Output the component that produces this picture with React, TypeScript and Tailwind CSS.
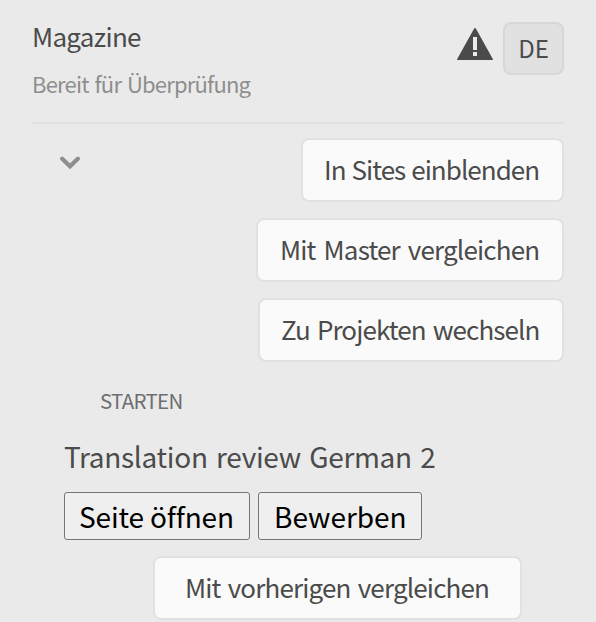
import React from "react";

function ActionButton({ label, className }: { label: string; className: string }) {
  return (
    <button
      className={`flex h-16 items-center rounded-lg border-2 border-[#e1e1e1] bg-[#fafafa] pb-[2px] text-[26px] leading-[30px] whitespace-nowrap text-[#4b4b4b] ${className}`}
    >
      {label}
    </button>
  );
}

function NativeButton({ label, className }: { label: string; className: string }) {
  return (
    <button
      className={`flex h-12 items-center rounded-[3px] border border-[#767676] bg-[#efefef] text-[28px] leading-[34px] whitespace-nowrap text-black ${className}`}
    >
      {label}
    </button>
  );
}

export default function App() {
  return (
    <main className="h-[622px] w-[596px] overflow-hidden bg-[#eaeaea] pl-8 font-['Noto_Sans_CJK_SC','Noto_Sans',sans-serif] text-[#4b4b4b]">
      <header className="flex h-[124px] w-[532px] justify-between border-b-2 border-[#e1e1e1]">
        <div className="pt-5 whitespace-nowrap">
          <h1 className="h-8 text-[26px] leading-8 tracking-[-0.7px]">Magazine</h1>
          <p className="mt-4 text-[22px] leading-[30px] tracking-[-0.8px] [word-spacing:1.7px] text-[#8e8e8e]">Bereit für Überprüfung</p>
        </div>
        <div className="flex pt-[22px]">
          <svg className="mt-[6px] mr-[10px] h-8 w-9" viewBox="0 0 36 32" aria-label="Warnung">
            <path d="M17 .7q1-1.2 2 0L35.8 31q.4 1-.8 1H1q-1.2 0-.8-1Z" fill="#4b4b4b" />
            <path d="M16 9h4v13h-4zM16 24h4v4h-4z" fill="#eaeaea" />
          </svg>
          <span className="flex h-[53px] w-[61px] items-center justify-center rounded-lg border-2 border-[#d7d7d7] bg-[#e1e1e1] pb-[2px] text-[24px] leading-7">
            DE
          </span>
        </div>
      </header>

      <section className="flex w-[532px] justify-between pt-[14px]">
        <svg className="mt-[18px] ml-7 h-[15px] w-5" viewBox="0 0 20 15" fill="none" aria-hidden="true">
          <path d="M2.2 2.800 10 10.300l7.800-7.500" stroke="#8e8e8e" strokeWidth="4.200" strokeLinecap="round" />
        </svg>
        <div className="flex flex-col items-end gap-4">
          <ActionButton label="In Sites einblenden" className="w-[263px] pl-[21px] tracking-[-0.95px] [word-spacing:1px]" />
          <ActionButton label="Mit Master vergleichen" className="w-[308px] pl-[22px] tracking-[-0.83px] [word-spacing:3px]" />
          <ActionButton label="Zu Projekten wechseln" className="w-[306px] pl-[21px] tracking-[-0.9px] [word-spacing:2px]" />
        </div>
      </section>

      <section className="whitespace-nowrap">
        <p className="mt-6 pl-[68px] text-[20.5px] leading-7 tracking-[-0.7px] text-[#6e6e6e]">STARTEN</p>
        <h2 className="mt-6 pl-8 text-[28px] leading-9 tracking-[-0.3px] [word-spacing:2.4px]">Translation review German 2</h2>
        <div className="mt-[18px] ml-8 flex gap-2">
          <NativeButton label="Seite öffnen" className="w-[186px] pl-[14px] tracking-[-0.15px]" />
          <NativeButton label="Bewerben" className="w-[164px] pl-[15px]" />
        </div>
        <div className="mt-4 ml-[121px]">
          <ActionButton label="Mit vorherigen vergleichen" className="w-[369px] pl-[30px] tracking-[-0.84px] [word-spacing:2.2px]" />
        </div>
      </section>
    </main>
  );
}
